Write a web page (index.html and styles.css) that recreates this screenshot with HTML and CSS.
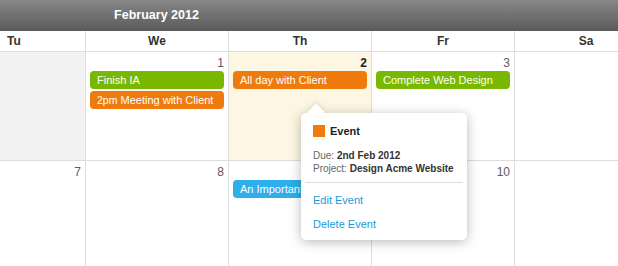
FILE: index.html
```html
<!DOCTYPE html>
<html lang="en">
<head>
    <meta charset="UTF-8">
    <title>February 2012</title>
    <link rel="stylesheet" href="styles.css">
</head>
<body>
    <section class="calendar">
        <header class="title">February 2012</header>
        <ul class="days">
            <li>Su</li>
            <li>Mo</li>
            <li>Tu</li>
            <li>We</li>
            <li>Th</li>
            <li>Fr</li>
            <li>Sa</li>
        </ul>
        <ul class="week">
            <li class="cell other"></li>
            <li class="cell other"></li>
            <li class="cell other"></li>
            <li class="cell">
                <span class="num">1</span>
                <div class="event green">Finish IA</div>
                <div class="event orange"><span class="time">2pm</span> Meeting with Client</div>
            </li>
            <li class="cell today">
                <span class="num">2</span>
                <div class="event orange">All day with Client</div>
            </li>
            <li class="cell">
                <span class="num">3</span>
                <div class="event green">Complete Web Design</div>
            </li>
            <li class="cell"><span class="num">4</span></li>
        </ul>
        <ul class="week">
            <li class="cell"><span class="num">5</span></li>
            <li class="cell"><span class="num">6</span></li>
            <li class="cell"><span class="num">7</span></li>
            <li class="cell"><span class="num">8</span></li>
            <li class="cell">
                <span class="num">9</span>
                <div class="event blue">An Important Meeting</div>
            </li>
            <li class="cell"><span class="num">10</span></li>
            <li class="cell"><span class="num">11</span></li>
        </ul>

        <div class="popover">
            <div class="pop-head">
                <span class="swatch"></span>
                <b>Event</b>
            </div>
            <p class="pop-info">Due: <b>2nd Feb 2012</b></p>
            <p class="pop-info">Project: <b>Design Acme Website</b></p>
            <hr>
            <a href="#" class="pop-link">Edit Event</a>
            <a href="#" class="pop-link">Delete Event</a>
        </div>
    </section>
</body>
</html>
```

FILE: styles.css
```css
* {
    margin: 0;
    padding: 0;
    box-sizing: border-box;
}
ul, ol {
    list-style: none;
}
html, body {
    overflow: hidden;
}
body {
    background: #fff;
    font-family: "Liberation Sans", Arial, Helvetica, sans-serif;
    color: #333;
}
.calendar {
    position: relative;
    width: 1001px;
    margin-left: -344px;
}
.title {
    height: 31px;
    line-height: 31px;
    text-align: center;
    font-size: 12.5px;
    font-weight: bold;
    color: #fff;
    background: linear-gradient(#878787, #5a5a5a);
}
.days, .week {
    display: grid;
    grid-template-columns: repeat(7, 143px);
    border-bottom: 1px solid #ddd;
}
.days li {
    height: 20px;
    line-height: 20px;
    text-align: center;
    font-size: 12px;
    font-weight: bold;
    color: #333;
    border-left: 1px solid #ddd;
}
.cell {
    min-height: 108px;
    padding: 4px 0 0;
    border-left: 1px solid #ddd;
}
.cell.other {
    background: #f2f2f2;
}
.cell.today {
    background: #fdf6e2;
}
.num {
    display: block;
    height: 15px;
    line-height: 15px;
    padding-right: 4px;
    text-align: right;
    font-size: 12px;
    color: #5c5c5c;
}
.today .num {
    font-weight: bold;
    color: #222;
}
.event {
    height: 18px;
    line-height: 18px;
    margin: 0 4px 2px;
    padding-left: 7px;
    border-radius: 4px;
    font-size: 11px;
    color: #fff;
    white-space: nowrap;
    overflow: hidden;
}
.event .time {
    font-size: 10.5px;
}
.green {
    background-color: #78b800;
}
.orange {
    background-color: #ef7a0d;
}
.blue {
    background-color: #2cafea;
}
.popover {
    position: absolute;
    left: 645px;
    top: 113px;
    z-index: 10;
    width: 166px;
    height: 127px;
    padding: 12px 12px 0;
    background: #fff;
    border-radius: 5px;
    box-shadow: 0 2px 12px rgba(0, 0, 0, 0.28);
}
.popover::before {
    content: "";
    position: absolute;
    left: 9px;
    top: -7px;
    width: 12px;
    height: 12px;
    background: #fff;
    transform: rotate(45deg);
    box-shadow: -2px -2px 5px rgba(0, 0, 0, 0.08);
}
.pop-head {
    display: flex;
    align-items: center;
    gap: 5px;
    height: 12px;
    font-size: 11px;
    color: #222;
    margin-bottom: 13px;
}
.swatch {
    width: 12px;
    height: 12px;
    background: #ef7a0d;
}
.pop-info {
    font-size: 10px;
    line-height: 12.5px;
    color: #666;
}
.pop-info b {
    color: #333;
}
.popover hr {
    border: none;
    border-top: 1px solid #ddd;
    margin: 7px -8px 10px;
}
.pop-link {
    display: block;
    height: 14px;
    line-height: 14px;
    margin-bottom: 10px;
    font-size: 11px;
    color: #1a9ad7;
    text-decoration: none;
}
```
